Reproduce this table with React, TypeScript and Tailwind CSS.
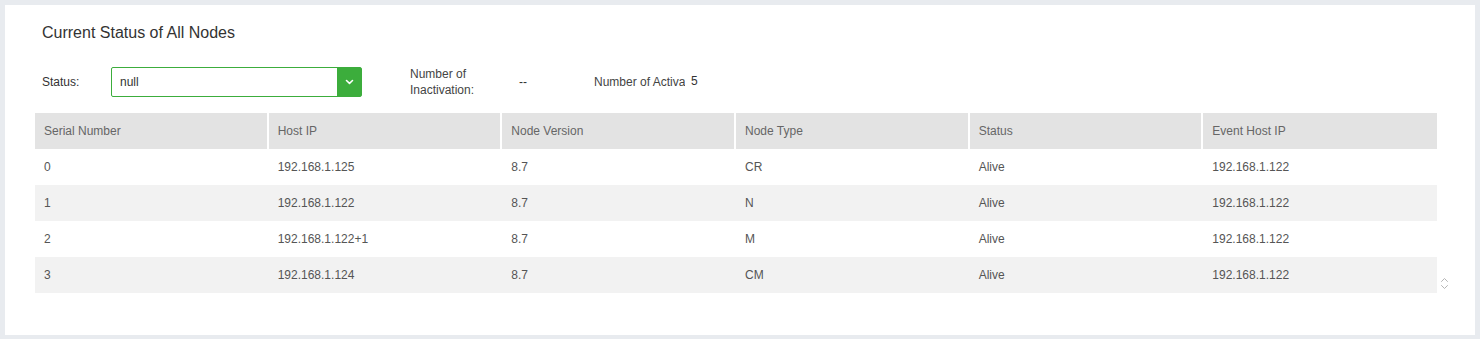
import React from "react";

const columns = ["Serial Number", "Host IP", "Node Version", "Node Type", "Status", "Event Host IP"];

const rows = [
  ["0", "192.168.1.125", "8.7", "CR", "Alive", "192.168.1.122"],
  ["1", "192.168.1.122", "8.7", "N", "Alive", "192.168.1.122"],
  ["2", "192.168.1.122+1", "8.7", "M", "Alive", "192.168.1.122"],
  ["3", "192.168.1.124", "8.7", "CM", "Alive", "192.168.1.122"],
];

const ChevronDown = () => (
  <svg width="9" height="6" viewBox="0 0 9 6" fill="none" stroke="white" strokeWidth="1.6" strokeLinecap="round" strokeLinejoin="round">
    <path d="M1.5 1.5L4.5 4.3L7.5 1.5" />
  </svg>
);

const SortIcon = () => (
  <svg width="9" height="13" viewBox="0 0 9 13" fill="none" stroke="#b5b5b5" strokeWidth="1" strokeLinecap="round" strokeLinejoin="round">
    <path d="M1.5 4.5L4.5 1.5L7.5 4.5" />
    <path d="M1.5 8.5L4.5 11.5L7.5 8.5" />
  </svg>
);

export default function App() {
  return (
    <div
      className="w-full h-[339px] bg-[#e8ebef] pt-[5px] px-[5px] pb-[4px]"
      style={{ fontFamily: '"Liberation Sans", Arial, sans-serif' }}
    >
      <div className="h-full bg-white pl-[30px] pr-[20px] pt-[18px]">
        {/* title */}
        <h2 className="ml-[7px] text-[16px] leading-[20px] text-[#333]">Current Status of All Nodes</h2>

        {/* filters */}
        <div className="mt-[24px] ml-[7px] flex items-center h-[30px] text-[12px] text-[#333]">
          <span className="w-[69px] leading-[16px]">Status:</span>
          <div className="flex h-[30px] w-[251px] border border-[#3cad3c] rounded-[2px]">
            <div className="flex-1 flex items-center pl-[8px]">null</div>
            <div className="w-[24px] bg-[#3cad3c] flex items-center justify-center">
              <ChevronDown />
            </div>
          </div>
          <span className="ml-[48px] w-[100px] leading-[16px] text-[#444]">
            Number of
            <br />
            Inactivation:
          </span>
          <span className="pl-[9px] w-[84px]">--</span>
          <span className="w-[91px] overflow-hidden whitespace-nowrap text-[#444]">Number of Activation:</span>
          <span className="pl-[6px] -mt-[2px]">5</span>
        </div>

        {/* table */}
        <div className="mt-[16px] flex items-end">
          <div className="w-[1402px] shrink-0 text-[12px]">
            <div className="grid grid-cols-6 h-[36px] bg-[#e3e3e3] text-[#666]">
              {columns.map((c, i) => (
                <div
                  key={c}
                  className={`flex items-center pl-[9px] ${i < columns.length - 1 ? "border-r-2 border-white" : ""}`}
                >
                  {c}
                </div>
              ))}
            </div>
            {rows.map((r, ri) => (
              <div key={ri} className={`grid grid-cols-6 h-[36px] text-[#555] ${ri % 2 === 1 ? "bg-[#f2f2f2]" : "bg-white"}`}>
                {r.map((cell, ci) => (
                  <div key={ci} className="flex items-center pl-[9px]">
                    {cell}
                  </div>
                ))}
              </div>
            ))}
          </div>
          <div className="ml-[3px] mb-[3px]">
            <SortIcon />
          </div>
        </div>
      </div>
    </div>
  );
}
